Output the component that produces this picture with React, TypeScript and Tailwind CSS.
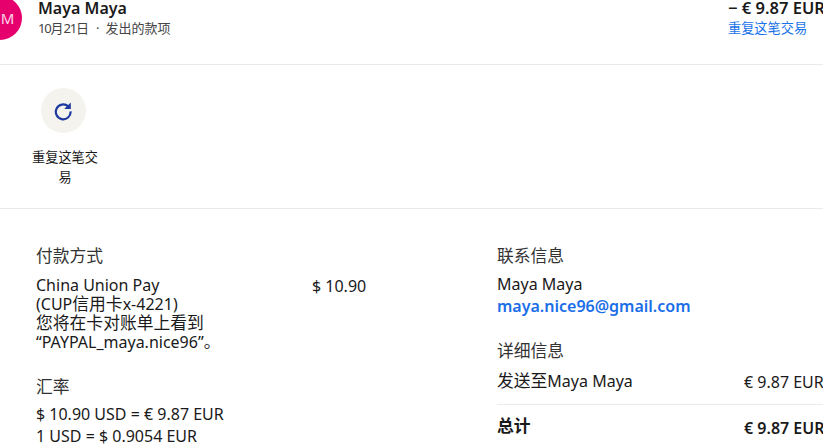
const sans = "font-['Noto_Sans','Noto_Sans_CJK_SC',sans-serif]";

const RepeatIcon = () => (
  <svg width="20" height="20" viewBox="0 0 20 20" fill="none" stroke="#1f3a9e" strokeWidth={2.2}>
    <path d="M15.2 5.4A7.4 7.4 0 1 0 17.6 10.4" />
    <path d="M17.8 1.4v6.6h-6.6z" fill="#1f3a9e" stroke="none" />
  </svg>
);

const Cjk = ({ children }: { children: string }) => <span className="text-[16.8px] leading-none">{children}</span>;

const App = () => {
  return (
    <div className={`${sans} w-[823px] h-[446px] overflow-hidden bg-white text-[#1a1a1a]`}>
      <div className="w-[840px]">
        {/* Header */}
        <div className="h-[65px] border-b border-[#eceae6]">
          <div className="flex justify-between h-full">
            <div className="flex items-start">
              <div className="-ml-[22px] -mt-[4px] w-[44px] h-[44px] rounded-full bg-[#e6006e] text-[#ffd6e8] text-[15px] flex items-center justify-center pl-[15px]">
                M
              </div>
              <div className="ml-[16px] mt-[-3px]">
                <div className="text-[16px] leading-[22px] font-semibold">Maya Maya</div>
                <div className="text-[13px] leading-[19px] text-[#444] whitespace-nowrap">
                  <span className="tracking-[-1.2px]">10</span>月<span className="tracking-[-1.2px]">21</span>日
                  <span className="ml-[7px] mr-[6px]">·</span>发出的款项
                </div>
              </div>
            </div>
            <div className="w-[112px] -mt-[3px]">
              <div className="text-[16.5px] leading-[22px] font-semibold whitespace-nowrap">− € 9.87 EUR</div>
              <div className="text-[13.2px] leading-[19px] text-[#1a73e8]">重复这笔交易</div>
            </div>
          </div>
        </div>

        {/* Actions */}
        <div className="h-[144px] border-b border-[#eceae6] pt-[23px] pl-[31px]">
          <div className="w-[68px] flex flex-col items-center">
            <div className="-ml-[4px] w-[45px] h-[45px] rounded-full bg-[#f4f3ee] flex items-center justify-center">
              <RepeatIcon />
            </div>
            <div className="mt-[14px] text-[13.2px] leading-[20px] text-center">重复这笔交易</div>
          </div>
        </div>

        {/* Details */}
        <div className="flex pl-[36px] pt-[35px]">
          <div className="w-[461px] flex">
            <div className="w-[276px]">
              <div className="text-[16.8px] leading-[24px] text-[#333]">付款方式</div>
              <div className="mt-[8px] text-[16px] leading-[19px]">
                China Union Pay
                <br />
                (CUP<Cjk>信用卡</Cjk>x-4221)
                <br />
                <Cjk>您将在卡对账单上看到</Cjk>
                <br />
                “PAYPAL_maya.nice96”<Cjk>。</Cjk>
              </div>
              <div className="mt-[23px] text-[16.8px] leading-[24px] text-[#333]">汇率</div>
              <div className="mt-[4px] text-[16px] leading-[22px] whitespace-nowrap">
                $ 10.90 USD = € 9.87 EUR
                <br />1 USD = $ 0.9054 EUR
              </div>
            </div>
            <div className="text-[16px] leading-[22px] mt-[31px]">$ 10.90</div>
          </div>
          <div className="w-[343px]">
            <div className="text-[16.8px] leading-[24px] text-[#333]">联系信息</div>
            <div className="mt-[5px] text-[16px] leading-[22px]">Maya Maya</div>
            <div className="text-[16px] leading-[22px] font-semibold text-[#1a6ee8]">maya.nice96@gmail.com</div>
            <div className="mt-[22px] text-[16.8px] leading-[24px] text-[#333]">详细信息</div>
            <div className="mt-[7px] pb-[11px] flex border-b border-[#eceae6]">
              <div className="w-[247px] text-[16px] leading-[22px]"><Cjk>发送至</Cjk>Maya Maya</div>
              <div className="text-[16px] leading-[22px] mt-[1px] whitespace-nowrap">€ 9.87 EUR</div>
            </div>
            <div className="mt-[10px] flex">
              <div className="w-[247px] text-[16.8px] leading-[22px] font-bold">总计</div>
              <div className="text-[16px] leading-[22px] mt-[2px] font-semibold whitespace-nowrap">€ 9.87 EUR</div>
            </div>
          </div>
        </div>
      </div>
    </div>
  );
};

export default App;
